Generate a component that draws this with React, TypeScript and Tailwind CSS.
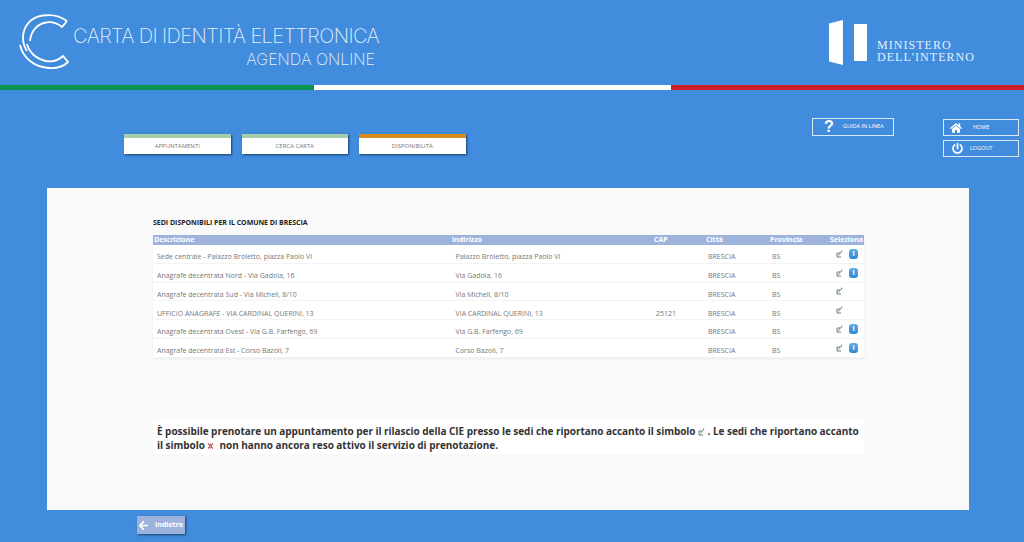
import { FaArrowLeft, FaHome, FaPowerOff } from "react-icons/fa";

const rows = [
  { desc: "Sede centrale - Palazzo Broletto, piazza Paolo VI", addr: "Palazzo Broletto, piazza Paolo VI", cap: "", info: true },
  { desc: "Anagrafe decentrata Nord - Via Gadola, 16", addr: "Via Gadola, 16", cap: "", info: true },
  { desc: "Anagrafe decentrata Sud - Via Micheli, 8/10", addr: "Via Micheli, 8/10", cap: "", info: false },
  { desc: "UFFICIO ANAGRAFE - VIA CARDINAL QUERINI, 13", addr: "VIA CARDINAL QUERINI, 13", cap: "25121", info: false },
  { desc: "Anagrafe decentrata Ovest - Via G.B. Farfengo, 69", addr: "Via G.B. Farfengo, 69", cap: "", info: true },
  { desc: "Anagrafe decentrata Est - Corso Bazoli, 7", addr: "Corso Bazoli, 7", cap: "", info: true },
];

function Pick() {
  return (
    <svg width="7" height="8" viewBox="0 0 7 8" className="inline-block" fill="none">
      <path d="M4 3 H1 V7 H5" stroke="#5d6b60" strokeWidth="0.9" />
      <path d="M2.5 5.5 L5.2 2" stroke="#5a9a62" strokeWidth="1" />
      <path d="M5 1 L6.2 1.6" stroke="#333" strokeWidth="0.9" />
    </svg>
  );
}

function Cross() {
  return (
    <svg width="7" height="8" viewBox="0 0 7 8" className="inline-block">
      <path d="M1 1.5 L6 6.5 M6 1.5 L1 6.5" stroke="#d8505c" strokeWidth="1.4" />
      <path d="M3.5 0.5 V7.5" stroke="#a0a0a0" strokeWidth="0.7" />
    </svg>
  );
}

function Info() {
  return (
    <span className="w-[9px] h-[10px] rounded-[3px] bg-gradient-to-b from-[#62aee6] to-[#2f86d0] text-white text-[7px] leading-[10px] text-center font-bold">
      i
    </span>
  );
}

function Tab({ label, active }: { label: string; active?: boolean }) {
  return (
    <div
      className={`w-[106.5px] h-[20px] bg-white border-t-[4px] ${active ? "border-[#dd8a1c]" : "border-[#a5cfa8]"} shadow-[1px_1px_2px_#1d3f6e] flex items-center justify-center text-[6px] text-[#777]`}
    >
      {label}
    </div>
  );
}

export default function App() {
  return (
    <div className="w-[1024px] h-[542px] overflow-hidden bg-[#418cdc] font-['Open_Sans',sans-serif]">
      {/* Header */}
      <header className="h-[85px] flex justify-between">
        <div className="flex pl-[19px] pt-[14px]">
          <svg width="50" height="56" viewBox="0 0 50 56" fill="none" stroke="white" strokeWidth="1.8" className="shrink-0">
            <path d="M48 7 C40 1 31 0.5 24 1.5 C12 3 4 12 4 24 C4 29 6 34 8 37" />
            <path d="M48 7 L43 13 C38 9 33 7.5 27 8.5 C18 10 12 17 11 27" />
            <path d="M1 31 C4 44 15 53 30 54 C37 54.5 44 53 49 48 L44 42 C39 47 33 48 27 47 C17 45 10 38 8 30" />
          </svg>
          <div className="ml-[4px] w-[307px] pt-[10px] text-[#e4f0fb] font-['Inter',sans-serif] font-extralight">
            <div className="text-[20px] leading-[24px] whitespace-nowrap tracking-[-0.6px]">CARTA DI IDENTITÀ ELETTRONICA</div>
            <div className="text-[16px] leading-[20px] mt-[1px] text-right pr-[5px] whitespace-nowrap">AGENDA ONLINE</div>
          </div>
        </div>
        <div className="flex pr-[49px] pt-[20px]">
          <div className="flex items-start gap-[11px]">
            <div className="w-[14px] h-[45px] bg-white [clip-path:polygon(0_8%,100%_0,100%_100%,0_92%)]" />
            <div className="w-[13px] h-[37px] mt-[4px] bg-white" />
          </div>
          <div className="ml-[10px] pt-[19px] text-[#e4f0fb] text-[12px] leading-[12px] tracking-[1.05px] font-['Liberation_Serif',serif]">
            <div>MINISTERO</div>
            <div className="whitespace-nowrap">DELL&apos;INTERNO</div>
          </div>
        </div>
      </header>

      {/* Tricolore */}
      <div className="flex h-[5px]">
        <div className="w-[314px] bg-[#0b9351]" />
        <div className="w-[357px] bg-white" />
        <div className="flex-1 bg-[#cb2027]" />
      </div>

      {/* Navigation */}
      <nav className="h-[98px] flex">
        <div className="ml-[124px] mt-[44px] flex gap-[11px] items-start">
          <Tab label="APPUNTAMENTI" />
          <Tab label="CERCA CARTA" />
          <Tab label="DISPONIBILITÀ" active />
        </div>
        <div className="ml-[346.5px] mt-[28px] w-[82px] h-[18px] border border-[#dbe9f7] flex items-center text-white">
          <span className="ml-[8px] w-[16px] text-center text-[16px] font-bold leading-none font-['Liberation_Sans',sans-serif]">?</span>
          <span className="ml-[6px] mb-[2px] text-[5.5px] whitespace-nowrap">GUIDA IN LINEA</span>
        </div>
        <div className="ml-[49px] mt-[29px] flex flex-col gap-[4px]">
          <div className="w-[76px] h-[17px] border border-[#dbe9f7] flex items-center text-white">
            <FaHome size={12} className="ml-[6px]" />
            <span className="ml-[11px] mb-[1px] text-[5.5px]">HOME</span>
          </div>
          <div className="w-[76px] h-[17px] border border-[#dbe9f7] flex items-center text-white">
            <FaPowerOff size={11} className="ml-[8px]" />
            <span className="ml-[7px] mb-[1px] text-[5.5px]">LOGOUT</span>
          </div>
        </div>
      </nav>

      {/* Main panel */}
      <main className="ml-[47px] w-[922px] h-[322px] bg-[#f9f9f9] pl-[106px] pr-[105px] pt-[30px]">
        <h2 className="text-[7px] leading-[10px] font-bold text-[#222] whitespace-nowrap tracking-[-0.03px]">SEDI DISPONIBILI PER IL COMUNE DI BRESCIA</h2>
        <div className="mt-[7px] bg-white shadow-[0_1px_2px_#ececec]">
          <div className="h-[10px] pb-[2px] bg-[#9eb3dc] flex items-center text-[7px] font-bold text-white leading-none">
            <span className="w-[299px] pl-[1px]">Descrizione</span>
            <span className="w-[202px]">Indirizzo</span>
            <span className="w-[52px]">CAP</span>
            <span className="w-[64px]">Città</span>
            <span className="w-[60px]">Provincia</span>
            <span className="whitespace-nowrap">Seleziona</span>
          </div>
          {rows.map((r) => (
            <div key={r.desc} className="h-[18.8px] flex items-center text-[7px] text-[#777] border-b border-[#f3f3f3] whitespace-nowrap">
              <span className="w-[302.5px] pl-[4px] pt-[7px]">{r.desc}</span>
              <span className="w-[200.5px] pt-[7px]">{r.addr}</span>
              <span className="w-[52px] pt-[7px]">{r.cap}</span>
              <span className="w-[64px] pt-[7px]">BRESCIA</span>
              <span className="w-[64px] pt-[7px]">BS</span>
              <span className="flex items-center gap-[6px]">
                <Pick />
                {r.info && <Info />}
              </span>
            </div>
          ))}
        </div>

        <div className="mt-[61px] bg-white px-[4px] pt-[5px] h-[35px] text-[10px] tracking-[-0.045px] leading-[14px] font-bold text-[#333] whitespace-nowrap">
          <div>
            È possibile prenotare un appuntamento per il rilascio della CIE presso le sedi che riportano accanto il simbolo <Pick /> . Le sedi che riportano accanto
          </div>
          <div>
            il simbolo <Cross /> &nbsp;non hanno ancora reso attivo il servizio di prenotazione.
          </div>
        </div>
      </main>

      {/* Back */}
      <div className="ml-[137px] mt-[6px] w-[48px] h-[18px] bg-[#9eb3dc] shadow-[1px_1px_2px_#1d3f6e] flex items-center text-white">
        <FaArrowLeft size={11} className="ml-[1px]" />
        <span className="ml-[6px] text-[7px] font-bold">Indietro</span>
      </div>
    </div>
  );
}
